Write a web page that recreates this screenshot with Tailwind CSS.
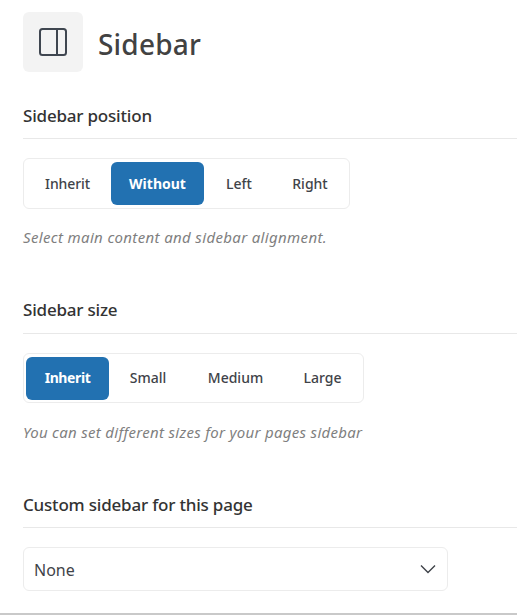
<!DOCTYPE html>
<html lang="en">
<head>
  <meta charset="UTF-8">
  <title>Sidebar</title>
  <script src="https://cdn.jsdelivr.net/npm/@tailwindcss/browser@4"></script>
</head>
<body class="bg-white font-['Noto_Sans',sans-serif] text-[#3f4349] overflow-hidden">
  <div class="w-[517px] h-[615px] pl-[23px] pt-3 border-b-2 border-[#c9c9c9] overflow-hidden">
    <!-- Header -->
    <div class="flex items-center gap-[15px] h-[60px]">
      <div class="w-[60px] h-[60px] bg-[#f3f3f3] rounded-md flex items-center justify-center">
        <svg width="30" height="30" viewBox="0 0 30 30" fill="none" stroke="#3f4650" stroke-width="2">
          <rect x="2" y="2" width="26" height="26" rx="2.5"/>
          <path d="M19 2v26"/>
        </svg>
      </div>
      <h1 class="pt-1 text-[28px] font-medium leading-none tracking-[0.2px] text-[#424242]">Sidebar</h1>
    </div>

    <!-- Sidebar position -->
    <h2 class="mt-[31px] text-[17px] leading-[26px] font-medium tracking-[-0.2px] text-[#333]">Sidebar position</h2>
    <div class="mt-[9px] border-t border-[#e8e8e8]"></div>
    <div class="mt-[19px] flex items-center w-[327px] h-[51px] border border-[#ececec] rounded-md text-sm font-medium">
      <span class="ml-[3px] mr-[3px] w-[81px] text-center tracking-[-0.1px]">Inherit</span>
      <span class="w-[93px] h-[43px] flex items-center justify-center bg-[#2271b1] text-white font-bold rounded-md">Without</span>
      <span class="w-[70px] text-center">Left</span>
      <span class="w-[72px] text-center">Right</span>
    </div>
    <p class="mt-[18px] text-[15px] leading-5 italic tracking-[0.35px] text-[#7f7f7f]">Select main content and sidebar alignment.</p>

    <!-- Sidebar size -->
    <h2 class="mt-[50px] text-[17px] leading-[26px] font-medium tracking-[-0.2px] text-[#333]">Sidebar size</h2>
    <div class="mt-[10px] border-t border-[#e8e8e8]"></div>
    <div class="mt-[19px] flex items-center w-[341px] h-[50px] border border-[#ececec] rounded-md text-sm font-medium">
      <span class="ml-[2px] w-[83px] h-[43px] flex items-center justify-center bg-[#2271b1] text-white font-bold rounded-md tracking-[-0.4px]">Inherit</span>
      <span class="w-[78px] text-center">Small</span>
      <span class="w-[97px] text-center">Medium</span>
      <span class="w-[77px] text-center">Large</span>
    </div>
    <p class="mt-[19px] text-[15px] leading-5 italic tracking-[0.3px] text-[#7f7f7f]">You can set different sizes for your pages sidebar</p>

    <!-- Custom sidebar -->
    <h2 class="mt-[50px] text-[17px] leading-[26px] font-medium tracking-[-0.2px] text-[#333]">Custom sidebar for this page</h2>
    <div class="mt-[9px] border-t border-[#e8e8e8]"></div>
    <div class="mt-[19px] flex items-center justify-between w-[425px] h-[44px] border border-[#ececec] rounded-md pl-[10px] pr-[11px] text-base">
      <span class="pt-0.5">None</span>
      <svg width="16" height="10" viewBox="0 0 16 10" fill="none" stroke="#3f4349" stroke-width="1.4"><path d="M1 1.5l7 7 7-7"/></svg>
    </div>
  </div>
</body>
</html>
